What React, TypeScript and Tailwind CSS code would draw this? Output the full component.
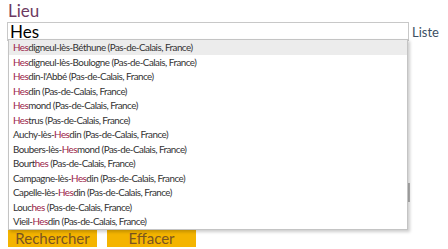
import React from 'react';

const items: [string, string, string][] = [
  ['', 'Hes', 'digneul-lès-Béthune'],
  ['', 'Hes', 'digneul-lès-Boulogne'],
  ['', 'Hes', "din-l'Abbé"],
  ['', 'Hes', 'din'],
  ['', 'Hes', 'mond'],
  ['', 'Hes', 'trus'],
  ['Auchy-lès-', 'Hes', 'din'],
  ['Boubers-lès-', 'Hes', 'mond'],
  ['Bourt', 'hes', ''],
  ['Campagne-lès-', 'Hes', 'din'],
  ['Capelle-lès-', 'Hes', 'din'],
  ['Louc', 'hes', ''],
  ['Vieil-', 'Hes', 'din'],
];

export default function App() {
  return (
    <div className="w-[448px] h-[249px] overflow-hidden bg-white px-2 pt-[1px] font-['Lato',sans-serif]">
      <label className="block text-[17px] leading-[19px] text-[#6d3a62]">Lieu</label>
      <div className="flex items-center gap-[3px]">
        <div className="relative w-[402px] -ml-px">
          <input
            readOnly
            value="Hes"
            className="w-full h-[19px] border border-[#c8c8c8] px-[2px] text-[17px] leading-[17px] text-black outline-none font-['Lato',sans-serif]"
          />
          {/* autocomplete menu */}
          <ul className="absolute left-px top-[19px] w-[400px] z-10 bg-white border border-[#c4c4c4] shadow-[2px_2px_3px_rgba(0,0,0,0.2)] text-[9.8px] tracking-[-0.5px] text-[#333]">
            {items.map(([pre, hit, post], i) => (
              <li
                key={i}
                className={`h-[14.5px] leading-[14.5px] pl-[4px] whitespace-nowrap ${i === 0 ? 'bg-[#ececec]' : ''}`}
              >
                {pre}
                <span className="text-[#9b1b47]">{hit}</span>
                {post} (Pas-de-Calais, France)
              </li>
            ))}
          </ul>
        </div>
        <span className="text-[13px] leading-[18px] text-[#3d5064]">Liste</span>
      </div>
      <div className="relative h-[186px]">
        <div className="absolute left-[399px] top-[139px] w-[3px] h-[19px] bg-[#b8b8b8]" />
      </div>
      <div className="flex gap-[10px]">
        <button className="w-[89px] h-[17px] bg-[#f4b400] text-[15px] leading-[17px] text-[#7a5520]">Rechercher</button>
        <button className="w-[89px] h-[17px] bg-[#f4b400] text-[15px] leading-[17px] text-[#7a5520]">Effacer</button>
      </div>
    </div>
  );
}
